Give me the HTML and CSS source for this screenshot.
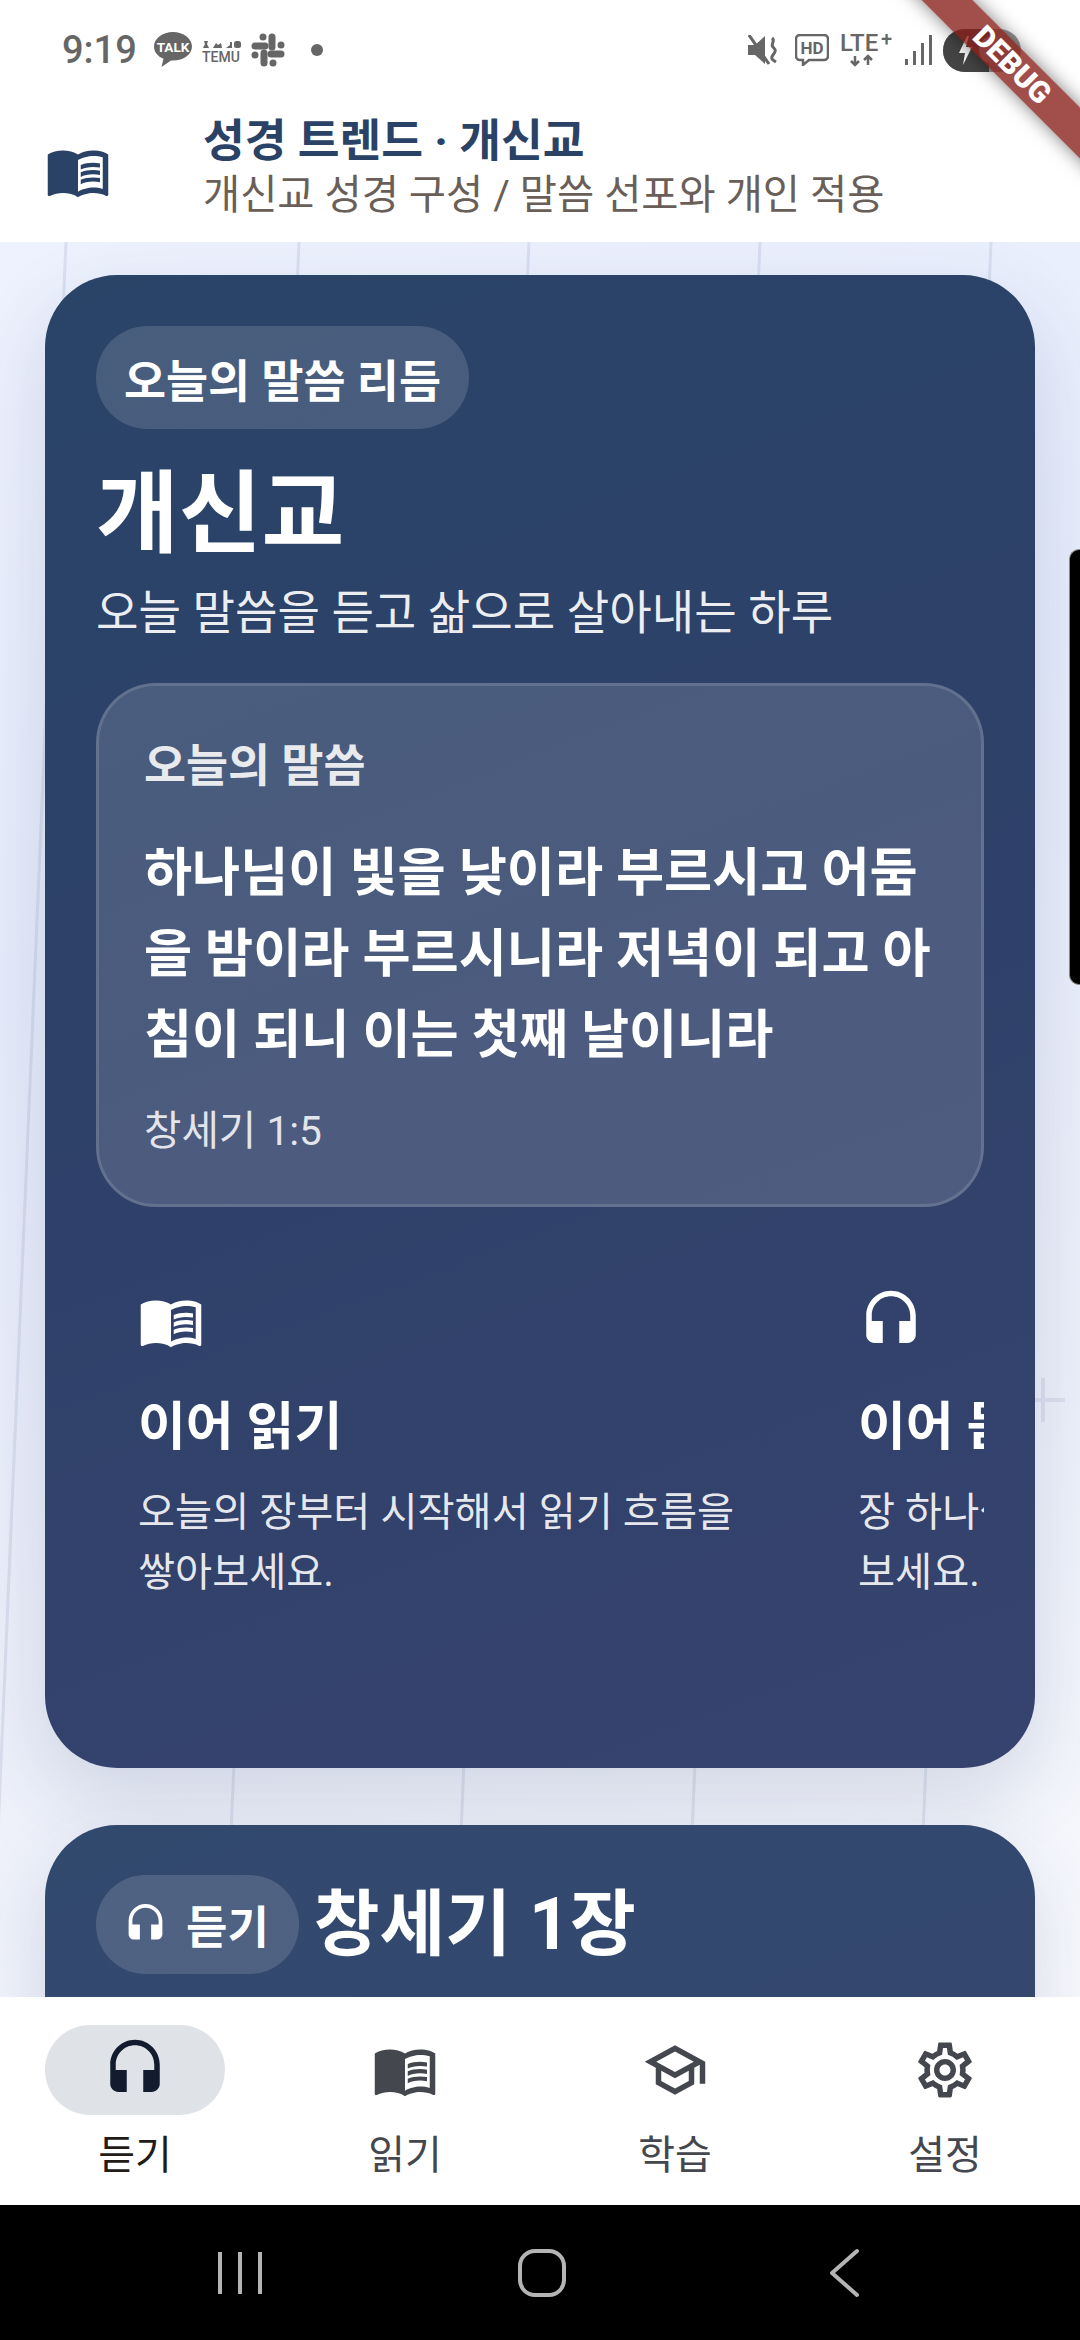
FILE: index.html
```html
<!DOCTYPE html>
<html lang="ko">
<head>
<meta charset="utf-8">
<title>성경 트렌드 · 개신교</title>
<link rel="stylesheet" href="styles.css">
</head>
<body>
<svg class="defs" width="0" height="0" aria-hidden="true">
  <symbol id="i-book" viewBox="0 0 24 24">
    <path d="M21 5c-1.11-.35-2.33-.5-3.5-.5-1.95 0-4.05.4-5.5 1.5-1.45-1.1-3.55-1.5-5.5-1.5S2.45 4.9 1 6v14.65c0 .25.25.5.5.5.1 0 .15-.05.25-.05C3.1 20.45 5.05 20 6.5 20c1.95 0 4.05.4 5.5 1.5 1.35-.85 3.8-1.5 5.5-1.5 1.65 0 3.35.3 4.75 1.05.1.05.15.05.25.05.25 0 .5-.25.5-.5V6c-.6-.45-1.25-.75-2-1zm0 13.5c-1.1-.35-2.3-.5-3.5-.5-1.7 0-4.15.65-5.5 1.5V8c1.35-.85 3.8-1.5 5.5-1.5 1.2 0 2.4.15 3.5.5v11.5z"/>
    <path d="M17.5 10.5c.88 0 1.73.09 2.5.26V9.24c-.79-.15-1.64-.24-2.5-.24-1.7 0-3.24.29-4.5.83v1.66c1.13-.64 2.7-.99 4.5-.99zM13 12.49v1.66c1.13-.64 2.7-.99 4.5-.99.88 0 1.73.09 2.5.26V11.9c-.79-.15-1.64-.24-2.5-.24-1.7 0-3.24.3-4.5.83zM17.5 14.33c-1.7 0-3.24.29-4.5.83v1.66c1.13-.64 2.7-.99 4.5-.99.88 0 1.73.09 2.5.26v-1.52c-.79-.16-1.64-.24-2.5-.24z"/>
  </symbol>
  <symbol id="i-phones" viewBox="0 0 24 24">
    <path d="M12 1c-4.97 0-9 4.03-9 9v7c0 1.66 1.34 3 3 3h3v-8H5v-2c0-3.87 3.13-7 7-7s7 3.13 7 7v2h-4v8h3c1.66 0 3-1.34 3-3v-7c0-4.97-4.03-9-9-9z"/>
  </symbol>
  <symbol id="i-school" viewBox="0 0 24 24">
    <path d="M12 3L1 9l4 2.18v6L12 21l7-3.82v-6l2-1.09V17h2V9L12 3zm6.82 6L12 12.72 5.18 9 12 5.28 18.82 9zM17 15.99l-5 2.73-5-2.73v-3.72L12 15l5-2.73v3.72z"/>
  </symbol>
  <symbol id="i-gear" viewBox="0 0 24 24">
    <path d="M19.43 12.98c.04-.32.07-.64.07-.98 0-.34-.03-.66-.07-.98l2.11-1.65c.19-.15.24-.42.12-.64l-2-3.46c-.09-.16-.26-.25-.44-.25-.06 0-.12.01-.17.03l-2.49 1c-.52-.4-1.08-.73-1.69-.98l-.38-2.65C14.46 2.18 14.25 2 14 2h-4c-.25 0-.46.18-.49.42l-.38 2.65c-.61.25-1.17.59-1.69.98l-2.49-1c-.06-.02-.12-.03-.18-.03-.17 0-.34.09-.43.25l-2 3.46c-.13.22-.07.49.12.64l2.11 1.65c-.04.32-.07.65-.07.98 0 .33.03.66.07.98l-2.11 1.65c-.19.15-.24.42-.12.64l2 3.46c.09.16.26.25.44.25.06 0 .12-.01.17-.03l2.49-1c.52.4 1.08.73 1.69.98l.38 2.65c.03.24.24.42.49.42h4c.25 0 .46-.18.49-.42l.38-2.65c.61-.25 1.17-.59 1.69-.98l2.49 1c.06.02.12.03.18.03.17 0 .34-.09.43-.25l2-3.46c.12-.22.07-.49-.12-.64l-2.11-1.65zm-1.98-1.71c.04.31.05.52.05.73 0 .21-.02.43-.05.73l-.14 1.13.89.7 1.08.84-.7 1.21-1.27-.51-1.04-.42-.9.68c-.43.32-.84.56-1.25.73l-1.06.43-.16 1.13-.2 1.35h-1.4l-.19-1.35-.16-1.13-1.06-.43c-.43-.18-.83-.41-1.23-.71l-.91-.7-1.06.43-1.27.51-.7-1.21 1.08-.84.89-.7-.14-1.13c-.03-.31-.05-.54-.05-.74s.02-.43.05-.73l.14-1.13-.89-.7-1.08-.84.7-1.21 1.27.51 1.04.42.9-.68c.43-.32.84-.56 1.25-.73l1.06-.43.16-1.13.2-1.35h1.39l.19 1.35.16 1.13 1.06.43c.43.18.83.41 1.23.71l.91.7 1.06-.43 1.27-.51.7 1.21-1.07.85-.89.7.14 1.13zM12 8c-2.21 0-4 1.79-4 4s1.79 4 4 4 4-1.79 4-4-1.79-4-4-4zm0 6c-1.1 0-2-.9-2-2s.9-2 2-2 2 .9 2 2-.9 2-2 2z"/>
  </symbol>
</svg>

<div class="screen">
  <header class="top">
    <div class="status">
      <div class="status-left">
        <span class="time">9:19</span>
        <svg class="st-talk" viewBox="0 0 38 36"><path class="st-fill" d="M19 0C8.5 0 0 6.500 0 14.500c0 5.500 3.800 10 9.500 12.300L7.500 35l9.500-6.500c.7 0 1.300.1 2 .1 10.500 0 19-6.300 19-14.100S29.500 0 19 0z"/><text x="19" y="19.500" class="st-talk-t">TALK</text></svg>
        <svg class="st-temu" viewBox="0 -4 40 30"><g class="st-fill"><path d="M3 0h4l-1 3 2 4H2l2-4z"/><path d="M12 7l3-5 2 2 3-2 1 5z"/><path d="M25 7l4-3v-3h2v6z"/><rect x="33" y="0" width="7" height="7" rx="2.500"/></g><text x="20" y="21" class="st-temu-t">TEMU</text></svg>
        <svg class="st-slack" viewBox="0 0 34 34"><g class="st-line"><path d="M21 4v10"/><path d="M13 30V20"/><path d="M4 13h10"/><path d="M30 21H20"/></g><g class="st-fill"><circle cx="12" cy="4" r="3.500"/><circle cx="30" cy="12" r="3.500"/><circle cx="4" cy="22" r="3.500"/><circle cx="22" cy="30" r="3.500"/></g></svg>
        <span class="st-dot"></span>
      </div>
      <div class="status-right">
        <svg class="st-mute" viewBox="0 0 30 30"><path class="st-fill" d="M0 10h7l10-9v28l-10-9H0z"/><path class="st-gap" d="M1 0l20 29"/><path class="st-wave" d="M24 3c4 3-2 6 1 9s3 4 0 8 0 5 3 7"/></svg>
        <svg class="st-hd" viewBox="0 0 34 32"><path class="st-thin" d="M5 1h24a4 4 0 0 1 4 4v17a4 4 0 0 1-4 4H14l-6 5v-5H5a4 4 0 0 1-4-4V5a4 4 0 0 1 4-4z"/><text x="17" y="20" class="st-hd-t">HD</text></svg>
        <svg class="st-lte" viewBox="0 -6 56 42"><text x="0" y="19" class="st-lte-t">LTE</text><text x="41" y="14" class="st-lte-p">+</text><path class="st-thin" d="M15 24v9m-4-4l4 4 4-4M28 33v-9m-4 4l4-4 4 4"/></svg>
        <svg class="st-signal" viewBox="0 0 28 30"><g class="st-fill"><rect x="0" y="24" width="3" height="6"/><rect x="8" y="16" width="3" height="14"/><rect x="16" y="8" width="3" height="22"/><rect x="24" y="0" width="3" height="30"/></g></svg>
        <svg class="st-batt" viewBox="0 0 78 43"><rect width="78" height="43" rx="21.500" fill="#999"/><path d="M21.500 0H46v43H21.500a21.500 21.500 0 0 1 0-43z" fill="#444"/><path d="M24 7l-8 17h6l-2 12 9-18h-6l3-11z" fill="#fff"/><circle cx="50" cy="21" r="14" fill="#aaa"/></svg>
      </div>
    </div>
    <div class="appbar">
      <svg class="ico ico-brand"><use href="#i-book"/></svg>
      <div class="appbar-text">
        <div class="app-title">성경 트렌드 · 개신교</div>
        <div class="app-sub">개신교 성경 구성 / 말씀 선포와 개인 적용</div>
      </div>
    </div>
  </header>

  <main class="main">
    <svg class="paper" viewBox="0 0 1080 1755" preserveAspectRatio="none" aria-hidden="true">
      <g class="paper-lines">
        <path d="M66 0L-9 1755"/>
        <path d="M299 0L224 1755"/>
        <path d="M529 0L454 1755"/>
        <path d="M760 0L685 1755"/>
        <path d="M991 0L916 1755"/>
      </g>
      <path class="paper-plus" d="M1043 1136v44M1030 1158h35"/>
    </svg>

    <section class="card card-hero">
      <div class="chip chip-lg">오늘의 말씀 리듬</div>
      <h1 class="hero-title">개신교</h1>
      <p class="hero-sub">오늘 말씀을 듣고 삶으로 살아내는 하루</p>

      <div class="verse">
        <div class="verse-label">오늘의 말씀</div>
        <div class="verse-text">하나님이 빛을 낮이라 부르시고 어둠<br>을 밤이라 부르시니라 저녁이 되고 아<br>침이 되니 이는 첫째 날이니라</div>
        <div class="verse-ref">창세기 1:5</div>
      </div>

      <div class="actions">
        <article class="action">
          <svg class="ico"><use href="#i-book"/></svg>
          <div class="action-title">이어 읽기</div>
          <div class="action-desc">오늘의 장부터 시작해서 읽기 흐름을<br>쌓아보세요.</div>
        </article>
        <article class="action">
          <svg class="ico"><use href="#i-phones"/></svg>
          <div class="action-title">이어 듣기</div>
          <div class="action-desc">장 하나씩 들으며 묵상해<br>보세요.</div>
        </article>
      </div>
    </section>

    <section class="card card-second">
      <div class="second-head">
        <div class="chip chip-sm"><svg class="ico ico-sm"><use href="#i-phones"/></svg>듣기</div>
        <h2 class="second-title">창세기 1장</h2>
      </div>
    </section>
  </main>

  <nav class="tabs">
    <div class="tab tab-on">
      <div class="tab-pill"><svg class="ico"><use href="#i-phones"/></svg></div>
      <div class="tab-label">듣기</div>
    </div>
    <div class="tab">
      <div class="tab-pill"><svg class="ico"><use href="#i-book"/></svg></div>
      <div class="tab-label">읽기</div>
    </div>
    <div class="tab">
      <div class="tab-pill"><svg class="ico"><use href="#i-school"/></svg></div>
      <div class="tab-label">학습</div>
    </div>
    <div class="tab">
      <div class="tab-pill"><svg class="ico"><use href="#i-gear"/></svg></div>
      <div class="tab-label">설정</div>
    </div>
  </nav>

  <div class="sysnav">
    <svg class="sys-ico" viewBox="0 0 60 46"><path d="M10 2v42M30 2v42M50 2v42"/></svg>
    <svg class="sys-ico" viewBox="0 0 60 50"><rect x="8" y="3" width="44" height="44" rx="15"/></svg>
    <svg class="sys-ico" viewBox="0 0 60 48"><path d="M43 2L18 24l25 22" class="sys-back"/></svg>
  </div>

  <div class="side-tab"></div>
  <div class="debug"><span>DEBUG</span></div>
</div>
</body>
</html>
```

FILE: styles.css
```css
* { box-sizing: border-box; }
html, body { margin: 0; padding: 0; }
body {
  width: 1080px;
  height: 2340px;
  overflow: hidden;
  font-family: Roboto, "Noto Sans CJK KR", sans-serif;
  background: #fff;
}
.defs { position: absolute; }
.screen {
  position: relative;
  width: 1080px;
  height: 2340px;
  overflow: hidden;
  display: flex;
  flex-direction: column;
}
.ico { width: 66px; height: 66px; fill: currentColor; display: block; flex: none; }

/* top */
.top { background: #fff; height: 242px; flex: none; display: flex; flex-direction: column; }
.status {
  height: 100px;
  display: flex;
  justify-content: space-between;
  align-items: center;
  padding: 0 59px 0 62px;
}
.status-left, .status-right { display: flex; align-items: center; }
.time { font-size: 38px; font-weight: 500; color: #666; letter-spacing: 0; line-height: 1; }
.st-fill { fill: #666; }
.st-line { stroke: #666; stroke-width: 7; stroke-linecap: round; fill: none; }
.st-thin { stroke: #666; stroke-width: 2.500; fill: none; }
.st-gap { stroke: #666; stroke-width: 3; fill: none; }
.st-wave { stroke: #666; stroke-width: 3; fill: none; }
.st-talk { width: 38px; height: 36px; margin-left: 17px; }
.st-talk-t { fill: #fff; font: 700 13.500px Roboto, sans-serif; text-anchor: middle; }
.st-temu { width: 40px; height: 30px; margin-left: 9px; margin-top: 4px; }
.st-temu-t { fill: #666; font: 500 14px Roboto, sans-serif; text-anchor: middle; }
.st-slack { width: 34px; height: 34px; margin-left: 10px; }
.st-dot { width: 12px; height: 12px; border-radius: 50%; background: #666; margin-left: 26px; }
.st-mute { width: 30px; height: 30px; }
.st-hd { width: 34px; height: 32px; margin-left: 17px; }
.st-hd-t { fill: #666; font: 700 17px Roboto, sans-serif; text-anchor: middle; }
.st-lte { width: 56px; height: 42px; margin-left: 11px; margin-top: -6px; }
.st-lte-t { fill: #666; font: 500 24px Roboto, sans-serif; }
.st-lte-p { fill: #666; font: 500 20px Roboto, sans-serif; }
.st-signal { width: 28px; height: 30px; margin-left: 9px; }
.st-batt { width: 78px; height: 43px; margin-left: 10px; }

.appbar { display: flex; align-items: center; padding: 0 0 0 45px; height: 142px; }
.ico-brand { color: #2a4266; }
.appbar-text { margin-left: 92px; padding-bottom: 5px; }
.app-title { font-size: 45.400px; font-weight: 700; line-height: 54px; color: #2a4266; }
.app-sub { font-size: 40.400px; font-weight: 400; line-height: 54px; color: #6a5f58; }

/* main */
.main {
  position: relative;
  flex: 1;
  min-height: 0;
  overflow: hidden;
  padding: 33px 45px 0;
  background: linear-gradient(160deg, #eef2fe 0%, #e6ecfb 35%, #edf0fa 70%, #f8f9fd 100%);
}
.paper { position: absolute; inset: 0; width: 100%; height: 100%; }
.paper-lines path { stroke: rgba(80, 100, 150, .12); stroke-width: 3; fill: none; }
.paper-plus { stroke: rgba(80, 80, 140, .1); stroke-width: 4; fill: none; }
.card {
  position: relative;
  border-radius: 72px;
  padding: 51px 51px 0;
  color: #fff;
  background: linear-gradient(160deg, #2a4468 0%, #2e4169 45%, #36436e 100%);
  box-shadow: 0 30px 80px rgba(40, 60, 110, .16);
}
.card-hero { height: 1493px; }
.card-second {
  margin-top: 57px;
  height: 500px;
  padding-top: 50px;
  background: linear-gradient(160deg, #32496e 0%, #35476f 100%);
}
.chip {
  display: inline-flex;
  align-items: center;
  border-radius: 60px;
  background: rgba(255, 255, 255, .14);
  color: #fff;
  font-weight: 700;
}
.chip-lg { height: 103px; padding: 0 28px; font-size: 45.700px; }
.chip-sm { height: 99px; padding: 0 30px 0 27px; font-size: 45px; gap: 18px; }
.ico-sm { width: 45px; height: 45px; }
.hero-title { margin: 36px 0 0; font-size: 90px; line-height: 100px; font-weight: 700; }
.hero-sub { margin: 18px 0 0; font-size: 46.200px; line-height: 60px; color: rgba(255, 255, 255, .92); font-weight: 400; }

.verse {
  margin-top: 40px;
  height: 524px;
  border: 3px solid rgba(255, 255, 255, .13);
  border-radius: 60px;
  background: rgba(255, 255, 255, .14);
  padding: 51px 45px 0;
}
.verse-label { font-size: 45.700px; line-height: 60px; font-weight: 700; color: rgba(255, 255, 255, .88); }
.verse-text { margin-top: 36px; font-size: 52.300px; line-height: 81px; font-weight: 700; white-space: nowrap; }
.verse-ref { margin-top: 27px; font-size: 40.700px; line-height: 56px; color: rgba(255, 255, 255, .85); }

.actions { display: flex; margin-top: 81px; overflow: hidden; }
.action { flex: none; width: 720px; padding-left: 42px; }
.action-title { margin-top: 42px; font-size: 52px; line-height: 64px; font-weight: 700; white-space: nowrap; }
.action-desc { margin-top: 23px; font-size: 40.300px; line-height: 60px; color: rgba(255, 255, 255, .9); white-space: nowrap; }

.second-head { display: flex; align-items: center; gap: 15px; }
.second-title { margin: 0; font-size: 71.500px; line-height: 99px; font-weight: 700; }

/* bottom tabs */
.tabs { flex: none; height: 208px; background: #fff; display: flex; padding-top: 28px; }
.tab { flex: 1; display: flex; flex-direction: column; align-items: center; color: #44474e; }
.tab-pill { width: 180px; height: 90px; border-radius: 45px; display: flex; align-items: center; justify-content: center; }
.tab-label { margin-top: 15px; font-size: 40px; line-height: 52px; font-weight: 400; }
.tab-on { color: #121c2e; }
.tab-on .tab-pill { background: #dfe2e7; }
.tab-on .tab-label { color: #211c18; }

/* system navigation */
.sysnav {
  flex: none;
  height: 135px;
  background: #000;
  display: flex;
  align-items: center;
  justify-content: center;
  gap: 242px;
  padding-left: 4px;
}
.sys-ico { width: 60px; height: 50px; fill: none; stroke: #b4b4b4; stroke-width: 4; }
.sys-back { stroke-linecap: round; stroke-linejoin: round; }

/* overlays */
.side-tab {
  position: absolute;
  right: 0;
  top: 549px;
  width: 11px;
  height: 436px;
  background: #000;
  border: 1px solid #888;
  border-right: 0;
  border-radius: 10px 0 0 10px;
}
.debug {
  position: absolute;
  left: 812px;
  top: 47px;
  width: 400px;
  height: 36px;
  transform: rotate(45deg);
  background: rgba(136, 28, 24, .78);
  box-shadow: 0 0 18px rgba(0, 0, 0, .5);
  display: flex;
  align-items: center;
  justify-content: center;
}
.debug span { color: #fff; font-size: 30px; font-weight: 900; line-height: 1; letter-spacing: 0; font-family: Roboto, sans-serif; }
```
